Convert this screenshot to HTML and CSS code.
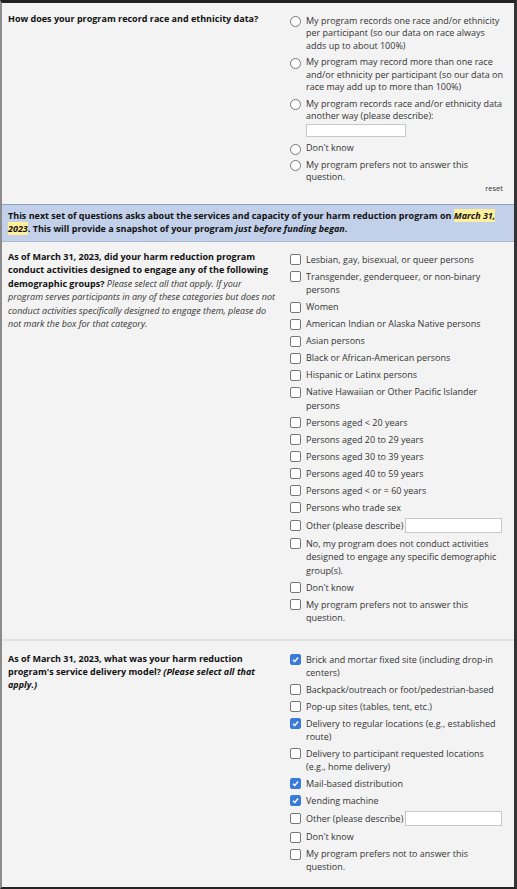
FILE: index.html
```html
<!DOCTYPE html>
<html>
<head>
<meta charset="utf-8">
<link rel="stylesheet" href="styles.css">
</head>
<body>
<div class="frame">
  <div class="row row1">
    <div class="q"><b>How does your program record race and ethnicity data?</b></div>
    <div class="opts">
      <label class="opt"><span class="radio"></span><span class="lbl">My program records one race and/or ethnicity per participant (so our data on race always adds up to about 100%)</span></label>
      <label class="opt"><span class="radio"></span><span class="lbl">My program may record more than one race and/or ethnicity per participant (so our data on race may add up to more than 100%)</span></label>
      <label class="opt"><span class="radio"></span><span class="lbl">My program records race and/or ethnicity data another way (please describe):<span class="txt block"></span></span></label>
      <label class="opt"><span class="radio"></span><span class="lbl">Don't know</span></label>
      <label class="opt"><span class="radio"></span><span class="lbl">My program prefers not to answer this question.</span></label>
      <div class="reset">reset</div>
    </div>
  </div>
  <div class="banner">This next set of questions asks about the services and capacity of your harm reduction program on <span class="hl">March 31, 2023</span>. This will provide a snapshot of your program <i>just before funding began</i>.</div>
  <div class="row row2">
    <div class="q"><b>As of March 31, 2023, did your harm reduction program conduct activities designed to engage any of the following demographic groups?</b> <i class="note">Please select all that apply. If your program serves participants in any of these categories but does not conduct activities specifically designed to engage them, please do not mark the box for that category.</i></div>
    <div class="opts">
      <label class="opt"><span class="cb"></span><span class="lbl">Lesbian, gay, bisexual, or queer persons</span></label>
      <label class="opt"><span class="cb"></span><span class="lbl">Transgender, genderqueer, or non-binary persons</span></label>
      <label class="opt"><span class="cb"></span><span class="lbl">Women</span></label>
      <label class="opt"><span class="cb"></span><span class="lbl">American Indian or Alaska Native persons</span></label>
      <label class="opt"><span class="cb"></span><span class="lbl">Asian persons</span></label>
      <label class="opt"><span class="cb"></span><span class="lbl">Black or African-American persons</span></label>
      <label class="opt"><span class="cb"></span><span class="lbl">Hispanic or Latinx persons</span></label>
      <label class="opt"><span class="cb"></span><span class="lbl">Native Hawaiian or Other Pacific Islander persons</span></label>
      <label class="opt"><span class="cb"></span><span class="lbl">Persons aged &lt; 20 years</span></label>
      <label class="opt"><span class="cb"></span><span class="lbl">Persons aged 20 to 29 years</span></label>
      <label class="opt"><span class="cb"></span><span class="lbl">Persons aged 30 to 39 years</span></label>
      <label class="opt"><span class="cb"></span><span class="lbl">Persons aged 40 to 59 years</span></label>
      <label class="opt"><span class="cb"></span><span class="lbl">Persons aged &lt; or = 60 years</span></label>
      <label class="opt"><span class="cb"></span><span class="lbl">Persons who trade sex</span></label>
      <label class="opt"><span class="cb"></span><span class="lbl nowrap">Other (please describe)<span class="txt other"></span></span></label>
      <label class="opt"><span class="cb"></span><span class="lbl">No, my program does not conduct activities designed to engage any specific demographic group(s).</span></label>
      <label class="opt"><span class="cb"></span><span class="lbl">Don't know</span></label>
      <label class="opt"><span class="cb"></span><span class="lbl">My program prefers not to answer this question.</span></label>
    </div>
  </div>
  <div class="row row3">
    <div class="q"><b>As of March 31, 2023, what was your harm reduction program's service delivery model? <i>(Please select all that apply.)</i></b></div>
    <div class="opts">
      <label class="opt"><span class="cb on"><svg viewBox="0 0 10 10"><path d="M2.2 5.2 L4.2 7.2 L7.9 2.8" fill="none" stroke="#fff" stroke-width="1.6"/></svg></span><span class="lbl">Brick and mortar fixed site (including drop-in centers)</span></label>
      <label class="opt"><span class="cb"></span><span class="lbl">Backpack/outreach or foot/pedestrian-based</span></label>
      <label class="opt"><span class="cb"></span><span class="lbl">Pop-up sites (tables, tent, etc.)</span></label>
      <label class="opt"><span class="cb on"><svg viewBox="0 0 10 10"><path d="M2.2 5.2 L4.2 7.2 L7.9 2.8" fill="none" stroke="#fff" stroke-width="1.6"/></svg></span><span class="lbl">Delivery to regular locations (e.g., established route)</span></label>
      <label class="opt"><span class="cb"></span><span class="lbl">Delivery to participant requested locations (e.g., home delivery)</span></label>
      <label class="opt"><span class="cb on"><svg viewBox="0 0 10 10"><path d="M2.2 5.2 L4.2 7.2 L7.9 2.8" fill="none" stroke="#fff" stroke-width="1.6"/></svg></span><span class="lbl">Mail-based distribution</span></label>
      <label class="opt"><span class="cb on"><svg viewBox="0 0 10 10"><path d="M2.2 5.2 L4.2 7.2 L7.9 2.8" fill="none" stroke="#fff" stroke-width="1.6"/></svg></span><span class="lbl">Vending machine</span></label>
      <label class="opt"><span class="cb"></span><span class="lbl nowrap">Other (please describe)<span class="txt other"></span></span></label>
      <label class="opt"><span class="cb"></span><span class="lbl">Don't know</span></label>
      <label class="opt"><span class="cb"></span><span class="lbl">My program prefers not to answer this question.</span></label>
    </div>
  </div>
</div>
</body>
</html>
```
FILE: styles.css
```css
html, body { margin: 0; padding: 0; }
body { width: 517px; height: 889px; overflow: hidden; background: #f3f3f3; font-family: "Open Sans", "DejaVu Sans", sans-serif; font-size: 9px; line-height: 13.5px; color: #222; }
.frame { box-sizing: border-box; width: 517px; height: 889px; border-top: 3px solid #222; border-left: 2px solid #8c8c8c; border-right: 3px solid #333; border-bottom: 2px solid #222; background: #f3f3f3; display: flex; flex-direction: column; overflow: hidden; }
.row { display: grid; grid-template-columns: 280px 1fr; }
.q { padding: 9px 4px 0 6px; color: #111; }
.q b { font-weight: 700; }
.note { color: #333; }
.opts { padding: 12px 11px 6px 8px; display: flex; flex-direction: column; }
.opt { display: flex; align-items: flex-start; margin-bottom: 3.5px; }
.lbl { flex: 1; color: #333; }
.lbl.nowrap { white-space: nowrap; display: flex; align-items: center; }
.radio { flex: none; width: 9px; height: 9px; border: 1px solid #777; border-radius: 50%; background: #fff; margin: 1.5px 5px 0 0; }
.cb { flex: none; width: 9px; height: 9px; border: 1px solid #777; border-radius: 2px; background: #fff; margin: 1.5px 5px 0 0; display: flex; }
.opt:has(.nowrap) .cb { margin-top: 2.5px; }
.cb.on { background: #3a7bd9; border-color: #3a7bd9; }
.cb svg { width: 9px; height: 9px; }
.txt { display: inline-block; background: #fff; border: 1px solid #c8c8c8; box-sizing: border-box; }
.txt.block { display: block; width: 100px; height: 13px; margin: 1.5px 0 1px; }
.txt.other { flex: none; width: 97px; height: 15.5px; margin-left: 2px; }

.row1 { line-height: 12.5px; }
.row1 .q { padding-top: 9px; line-height: 13.5px; }
.row1 .opts { padding-top: 11.75px; padding-bottom: 11px; }
.row1 .opt { margin-bottom: 4px; }
.reset { text-align: right; font-size: 7.5px; color: #333; margin-top: -5.25px; line-height: 10px; }

.banner { background: #c2d0ea; border-top: 1px solid #8fa0c0; border-bottom: 1px solid #a9b8d3; padding: 4px 8px 5px 6px; font-weight: 700; color: #111; line-height: 13.5px; }
.hl { background: #ffef9a; font-style: italic; }
.banner i { font-weight: 700; }

.row2 { border-bottom: 2px solid #e2e2e2; }
.row2 .q { padding-top: 8.25px; }
.row2 .opts { padding-top: 11.25px; padding-bottom: 11px; }

.row3 { flex: 1; }
.row3 .q { padding-top: 10.5px; line-height: 13px; }
.row3 .opts { padding-top: 11.5px; line-height: 13px; }
.row3 .opt { margin-bottom: 4px; }
```
